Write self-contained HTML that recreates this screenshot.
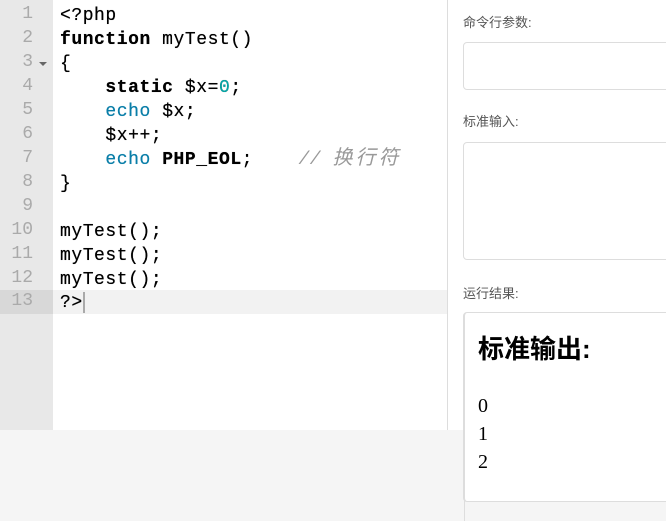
<!DOCTYPE html>
<html><head><meta charset="utf-8"><style>
body{margin:0;width:666px;height:521px;background:#f5f5f5;position:relative;overflow:hidden;font-family:"Liberation Sans","Noto Sans CJK SC",sans-serif}
#ed{position:absolute;left:0;top:0;width:447px;height:430px;background:#fff;border-right:1px solid #ddd}
#gut{position:absolute;left:0;top:0;width:53px;height:430px;background:#e8e8e8}
.ln{position:absolute;left:0;width:53px;height:24px;line-height:24px;font:18px "Liberation Mono",monospace;color:#aaa;}
.ln span{position:absolute;right:20px}
.cl{position:absolute;left:60px;height:24px;line-height:24px;font-family:"Liberation Mono","Noto Sans CJK SC",monospace;font-size:18px;letter-spacing:0.55px;color:#000;white-space:pre;text-shadow:0 0 0.4px #000}
.b{font-weight:bold}.k{color:#0a7ea8;text-shadow:0 0 0.4px #0a7ea8}.n{color:#0aa}.c{color:#999;font-style:italic;text-shadow:none}
.cj{font-size:20px;letter-spacing:3px}
#right{position:absolute;left:448px;top:0;width:218px;height:430px;background:#fff}
.lab{position:absolute;left:463px;font-size:13px;color:#555}
.box{position:absolute;left:463px;width:220px;border:1px solid #ddd;border-radius:4px;background:#fff}
</style></head><body>
<div id="ed">
<div id="gut"></div>
<div style="position:absolute;left:0;top:290px;width:53px;height:24px;background:#d8d8d8"></div>
<div style="position:absolute;left:53px;top:290px;width:394px;height:24px;background:#f2f2f2"></div>
<div class="ln" style="top:4px"><span>1</span></div>
<div class="ln" style="top:28px"><span>2</span></div>
<div class="ln" style="top:52px"><span>3</span><i style="position:absolute;left:39px;top:10px;border-left:4px solid transparent;border-right:4px solid transparent;border-top:4px solid #666"></i></div>
<div class="ln" style="top:76px"><span>4</span></div>
<div class="ln" style="top:100px"><span>5</span></div>
<div class="ln" style="top:124px"><span>6</span></div>
<div class="ln" style="top:148px"><span>7</span></div>
<div class="ln" style="top:172px"><span>8</span></div>
<div class="ln" style="top:196px"><span>9</span></div>
<div class="ln" style="top:220px"><span>10</span></div>
<div class="ln" style="top:244px"><span>11</span></div>
<div class="ln" style="top:268px"><span>12</span></div>
<div class="ln" style="top:291px"><span>13</span></div>
<div class="cl" style="top:4px">&lt;?php</div>
<div class="cl" style="top:28px"><span class="b">function</span> myTest()</div>
<div class="cl" style="top:52px">{</div>
<div class="cl" style="top:76px">    <span class="b">static</span> $x=<span class="n">0</span>;</div>
<div class="cl" style="top:100px">    <span class="k">echo</span> $x;</div>
<div class="cl" style="top:124px">    $x++;</div>
<div class="cl" style="top:148px">    <span class="k">echo</span> <span class="b">PHP_EOL</span>;    <span class="c">// <span class="cj">换行符</span></span></div>
<div class="cl" style="top:172px">}</div>
<div class="cl" style="top:220px">myTest();</div>
<div class="cl" style="top:244px">myTest();</div>
<div class="cl" style="top:268px">myTest();</div>
<div class="cl" style="top:291px">?&gt;</div>
<div style="position:absolute;left:83px;top:292px;width:2px;height:21px;background:#aaa"></div>
</div>
<div id="right"></div>
<div class="lab" style="top:12px">命令行参数:</div>
<div class="box" style="top:42px;height:46px"></div>
<div class="lab" style="top:111px">标准输入:</div>
<div class="box" style="top:142px;height:116px"></div>
<div class="lab" style="top:283px">运行结果:</div>
<div style="position:absolute;left:464px;top:500px;width:1px;height:21px;background:#ddd"></div>
<div class="box" style="top:312px;height:188px;border-left:2px solid #ddd">
<div style="position:absolute;left:13px;top:16px;font-size:26px;font-weight:bold;color:#000">标准输出:</div>
<div style="position:absolute;left:13px;top:79px;font:20px/28px 'Liberation Serif',serif;color:#000">0<br>1<br>2</div>
</div>
</body></html>
